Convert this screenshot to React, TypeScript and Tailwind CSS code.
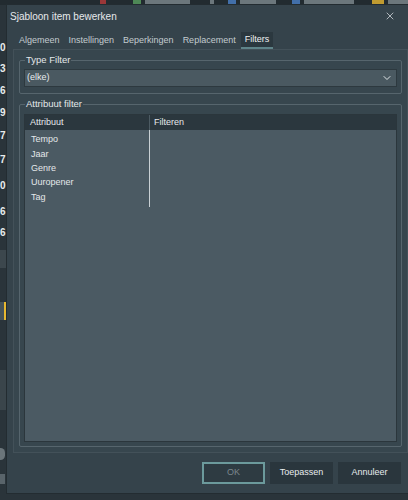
import { ChevronDown, X } from "lucide-react";

const tabs = ["Algemeen", "Instellingen", "Beperkingen", "Replacement", "Filters"];
const attributes = ["Tempo", "Jaar", "Genre", "Uuropener", "Tag"];

// edge of the window behind the dialog
const backdropGlyphs: { ch: string; top: number }[] = [
  { ch: "0", top: 42 },
  { ch: "3", top: 63 },
  { ch: "6", top: 85 },
  { ch: "9", top: 107 },
  { ch: "7", top: 130 },
  { ch: "7", top: 154 },
  { ch: "0", top: 180 },
  { ch: "6", top: 206 },
  { ch: "6", top: 227 },
];

// blurred taskbar entries: [left, width, colour]
const taskbarItems: [number, number, string][] = [
  [100, 6, "#b83a3a"],
  [133, 8, "#5aa060"],
  [145, 45, "#7f8a90"],
  [210, 4, "#7f8a90"],
  [228, 8, "#4a80c8"],
  [240, 36, "#7f8a90"],
  [292, 8, "#4a80c8"],
  [304, 50, "#7f8a90"],
  [372, 12, "#e8b830"],
  [388, 20, "#7f8a90"],
];

function GroupBox({ title, className, children }: { title: string; className?: string; children: React.ReactNode }) {
  return (
    <div className={`relative border border-[#56656d] rounded-[2px] px-[4px] ${className ?? ""}`}>
      <span className="absolute left-[5px] top-[-7px] px-[1px] bg-[#37464e] text-[9.5px] leading-[12px] text-[#e4e8ea]">
        {title}
      </span>
      {children}
    </div>
  );
}

export default function App() {
  return (
    <div className="relative w-[408px] h-[500px] overflow-hidden bg-[#2a343a] font-['Liberation_Sans',Arial,sans-serif]">
      {/* taskbar strip */}
      <div className="absolute left-0 top-0 w-full h-[5px] bg-[#222b30]">
        {taskbarItems.map(([left, width, color], i) => (
          <span
            key={i}
            className="absolute top-0 h-[4px] blur-[0.6px] opacity-80"
            style={{ left, width, background: color }}
          />
        ))}
      </div>

      {backdropGlyphs.map((g, i) => (
        <span
          key={i}
          className="absolute left-0 w-[7px] text-[10px] leading-[12px] font-bold text-[#e8ecee]"
          style={{ top: g.top }}
        >
          {g.ch}
        </span>
      ))}
      <div className="absolute left-0 top-[250px] w-[6px] h-[18px] bg-[#3c474d]" />
      <div className="absolute left-0 top-[302px] w-[6px] h-[18px] bg-[#46535a] border-r-2 border-[#e8b830]" />
      <div className="absolute left-0 top-[370px] w-[6px] h-[40px] bg-[#3a454b]" />
      <div className="absolute left-[-4px] top-[448px] w-[9px] h-[12px] rounded-full bg-[#6b757a]" />
      <div className="absolute left-0 top-[474px] w-[5px] h-[10px] bg-[#59646a]" />

      {/* dialog window */}
      <div className="absolute left-[6px] top-[4px] w-[410px] h-[490px] bg-[#35434b] border border-[#232c31] flex flex-col">
        <div className="h-[22px] flex items-center pl-[3px] pr-[19px]">
          <span className="flex-1 text-[10px] text-[#e6e9eb]">Sjabloon item bewerken</span>
          <X className="w-[12px] h-[12px] text-[#d9dee1]" strokeWidth={1.5} />
        </div>

        <div className="h-[17px] mt-[5px] flex items-stretch pl-[8px] gap-[1px] text-[9px]">
          {tabs.map((t) => (
            <span
              key={t}
              className={
                t === "Filters"
                  ? "px-[4px] flex items-center bg-[#2b383f] text-[#f0f2f3] border-b-2 border-[#5f8489]"
                  : "px-[4px] flex items-center text-[#c3cbcf]"
              }
            >
              {t}
            </span>
          ))}
        </div>

        <div className="ml-[6px] mr-[7px] h-[404px] bg-[#37464e] border border-[#435159] flex flex-col gap-[10px] px-[5px] pt-[10px] pb-[5px]">
          <GroupBox title="Type Filter" className="pt-[8px] pb-[6px]">
            <div className="h-[18px] bg-[#4a5961] border border-[#2d393f] flex items-center justify-between pl-[2px] pr-[3px]">
              <span className="text-[9px] text-[#e8ecee]">(elke)</span>
              <ChevronDown className="w-[12px] h-[12px] text-[#e0e5e8]" strokeWidth={2} />
            </div>
          </GroupBox>

          <GroupBox title="Attribuut filter" className="flex-1 flex flex-col pt-[9px] pb-[4px]">
            <div className="flex-1 bg-[#4b5a63] border border-[#2b363c] flex flex-col">
              <div className="h-[15px] bg-[#2b373e] flex text-[9px] text-[#e6eaec]">
                <span className="w-[125px] pl-[5px] flex items-center border-r border-[#4d5b63]">Attribuut</span>
                <span className="pl-[4px] flex items-center">Filteren</span>
              </div>
              <div className="flex">
                <div className="w-[125px] border-r border-[#c9d0d4] pt-[3px] pb-[3px]">
                  {attributes.map((a) => (
                    <div key={a} className="h-[14.3px] pl-[6px] flex items-center text-[9px] text-[#e4e8ea]">
                      {a}
                    </div>
                  ))}
                </div>
              </div>
            </div>
          </GroupBox>
        </div>

        <div className="flex justify-end gap-[5px] pr-[14px] mt-[9px] text-[9px]">
          <button className="w-[63px] h-[22px] bg-[#2e3b42] border-2 border-[#6c9a9c] text-[#7b878d]">OK</button>
          <button className="w-[63px] h-[22px] bg-[#2a363d] text-[#e8ecee]">Toepassen</button>
          <button className="w-[63px] h-[22px] bg-[#2a363d] text-[#e8ecee]">Annuleer</button>
        </div>
      </div>
    </div>
  );
}
